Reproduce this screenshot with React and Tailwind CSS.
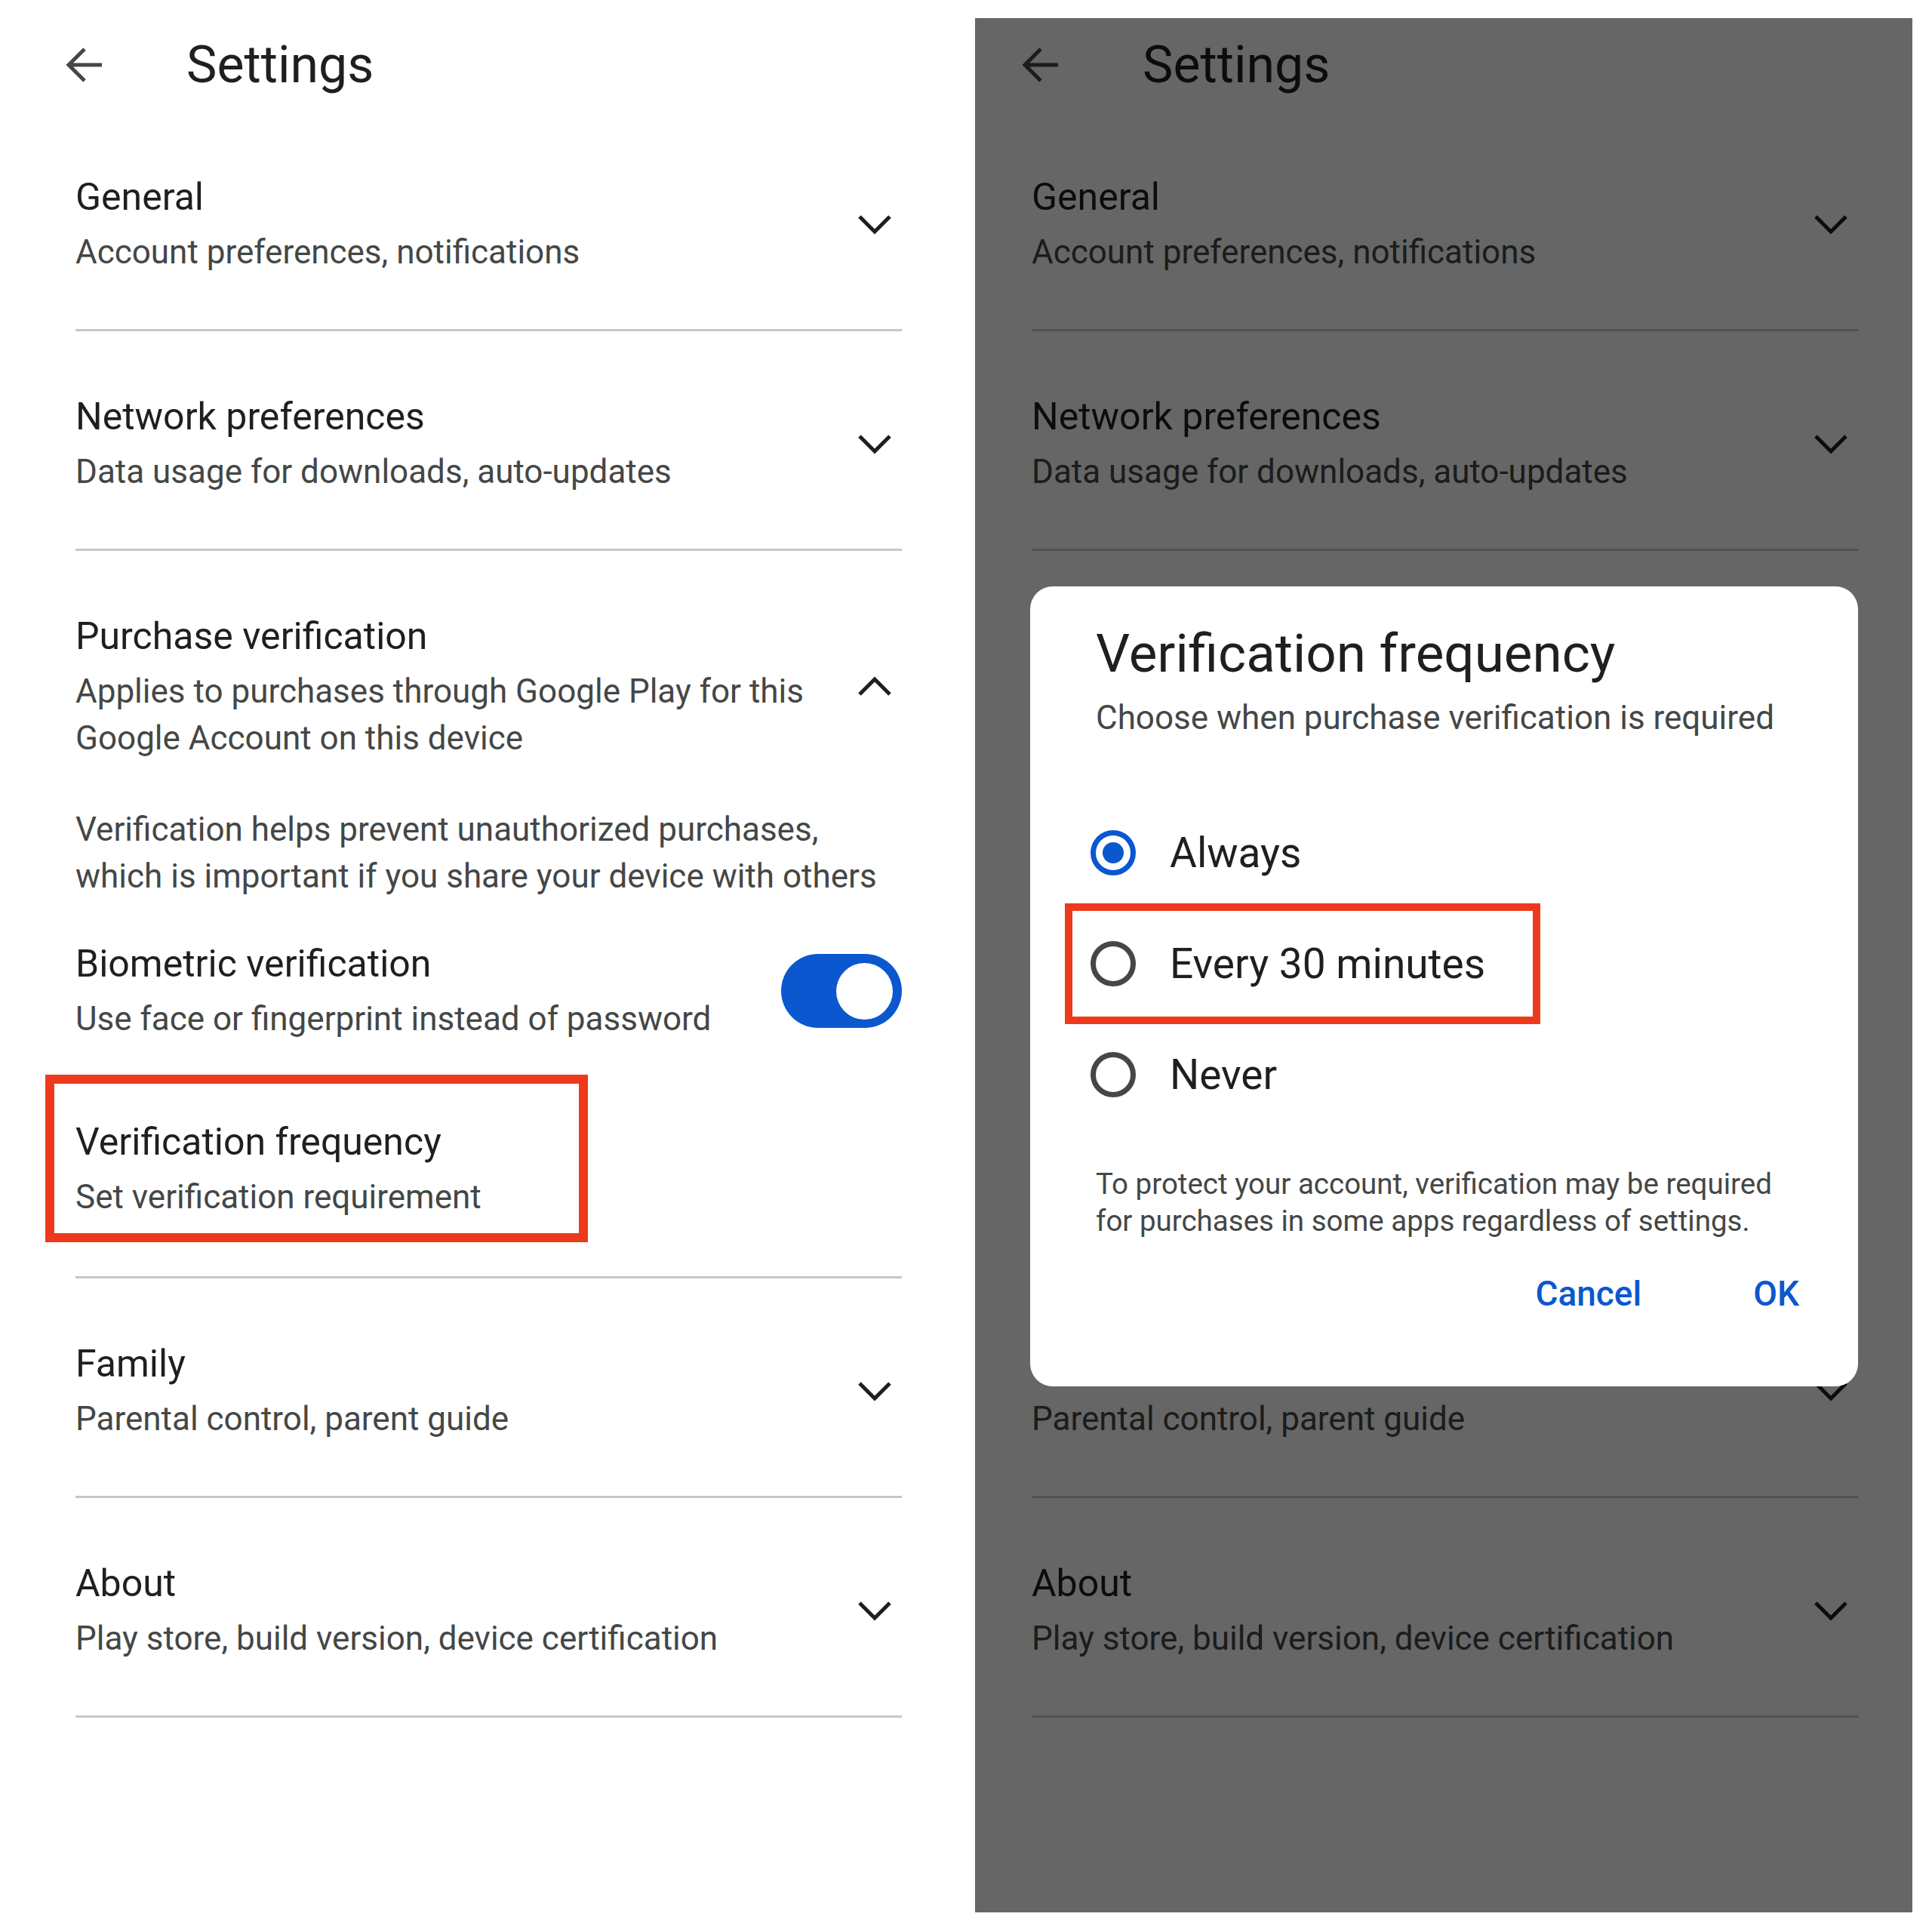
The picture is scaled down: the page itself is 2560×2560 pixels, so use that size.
const Chevron=({up})=>(
  <svg width="46" height="28" viewBox="0 0 46 28" fill="none" className={up?"rotate-180":""}>
    <polyline points="3,4 23,24 43,4" stroke="#1f1f1f" strokeWidth="5"/>
  </svg>
);

const BackArrow=()=>(
  <svg width="50" height="50" viewBox="0 0 50 50" fill="none" stroke="#444746" strokeWidth="5">
    <path d="M48 25H5M25 4L4 25l21 21"/>
  </svg>
);

const Toggle=()=>(
  <div className="flex h-[98px] w-[160px] items-center justify-end rounded-full bg-[#0b57d0] pr-[12px]">
    <div className="h-[75px] w-[75px] rounded-full bg-white"/>
  </div>
);

const TitleSub=({title,children,hideTitle})=>(
  <div>
    <div className={hideTitle?"invisible text-[50px] leading-[64px] text-[#1f1f1f]":"text-[50px] leading-[64px] text-[#1f1f1f]"}>{title}</div>
    <div className="mt-[10px] whitespace-nowrap text-[44px] leading-[62px] text-[#444746]">{children}</div>
  </div>
);

const Row=({title,sub,hideTitle})=>(
  <div className="flex items-center justify-between border-b-[3px] border-[#c7c7c7] pt-[81px] pb-[71px]">
    <TitleSub title={title} hideTitle={hideTitle}>{sub}</TitleSub>
    <div className="mr-[13px]"><Chevron/></div>
  </div>
);

// covered: right-hand copy, where the dialog hides the middle of the list
const Screen=({highlight,covered})=>(
  <div className="h-full w-full bg-white">
    <div className="flex h-[124px] items-center pl-[62px]">
      <BackArrow/>
      <div className="ml-[110px] text-[68px] leading-[80px] text-[#1f1f1f]">Settings</div>
    </div>
    <div className="pl-[75px] pr-[72px]">
      <Row title="General" sub="Account preferences, notifications"/>
      <Row title="Network preferences" sub="Data usage for downloads, auto-updates"/>

      <div className="border-b-[3px] border-[#c7c7c7] pt-[81px] pb-[74px]">
        <div className={covered?"invisible":""}>
          <div className="flex items-center justify-between">
            <TitleSub title="Purchase verification">
              Applies to purchases through Google Play for this<br/>Google Account on this device
            </TitleSub>
            <div className="mr-[13px]"><Chevron up/></div>
          </div>
          <p className="mt-[59px] whitespace-nowrap text-[44px] leading-[62px] text-[#444746]">
            Verification helps prevent unauthorized purchases,<br/>which is important if you share your device with others
          </p>
          <div className="mt-[53px] flex items-center justify-between">
            <TitleSub title="Biometric verification">Use face or fingerprint instead of password</TitleSub>
            <Toggle/>
          </div>
          <div className="relative mt-[100px]">
            {highlight&&<div className="absolute -left-[40px] -top-[57px] h-[222px] w-[719px] border-[12px] border-[#ee3a1c]"/>}
            <TitleSub title="Verification frequency">Set verification requirement</TitleSub>
          </div>
        </div>
      </div>

      <Row title="Family" sub="Parental control, parent guide" hideTitle={covered}/>
      <Row title="About" sub="Play store, build version, device certification"/>
    </div>
  </div>
);

const Radio=({checked})=>(
  <div className={checked
    ?"flex h-[60px] w-[60px] shrink-0 items-center justify-center rounded-full border-[7px] border-[#0b57d0]"
    :"flex h-[60px] w-[60px] shrink-0 items-center justify-center rounded-full border-[7px] border-[#444746]"}>
    {checked&&<div className="h-[28px] w-[28px] rounded-full bg-[#0b57d0]"/>}
  </div>
);

const options=[
  {label:"Always",checked:true},
  {label:"Every 30 minutes",highlight:true},
  {label:"Never"},
];

const Dialog=()=>(
  <div className="absolute left-[73px] top-[753px] w-[1097px] rounded-[30px] bg-white pl-[87px] pr-[78px] pt-[49px] pb-[95px]">
    <h2 className="text-[71px] leading-[80px] text-[#1f1f1f]">Verification frequency</h2>
    <p className="mt-[17px] whitespace-nowrap text-[44px] leading-[56px] text-[#444746]">Choose when purchase verification is required</p>
    <div className="mt-[77px] -ml-[7px]">
      {options.map(o=>(
        <div key={o.label} className="relative flex h-[147px] items-center">
          {o.highlight&&<div className="absolute -left-[34px] -top-[6px] h-[160px] w-[630px] border-[10px] border-[#ee3a1c]"/>}
          <Radio checked={o.checked}/>
          <span className="ml-[45px] text-[55px] leading-[64px] text-[#1f1f1f]">{o.label}</span>
        </div>
      ))}
    </div>
    <p className="mt-[47px] whitespace-nowrap text-[38.5px] leading-[49px] text-[#444746]">
      To protect your account, verification may be required<br/>for purchases in some apps regardless of settings.
    </p>
    <div className="mt-[44px] flex justify-end gap-[148px]">
      <span className="text-[46px] leading-[56px] font-medium text-[#0b57d0]">Cancel</span>
      <span className="text-[46px] leading-[56px] font-medium text-[#0b57d0]">OK</span>
    </div>
  </div>
);

export default function App(){
  return(
    <div className="flex h-[2560px] w-[2560px] gap-[25px] bg-white pt-[24px] pl-[25px] font-['Roboto',sans-serif]">
      <div className="relative h-[2510px] w-[1242px] overflow-hidden">
        <Screen highlight/>
      </div>
      <div className="relative h-[2510px] w-[1242px] overflow-hidden">
        <Screen covered/>
        <div className="absolute inset-0 bg-black/60"/>
        <Dialog/>
      </div>
    </div>
  );
}
